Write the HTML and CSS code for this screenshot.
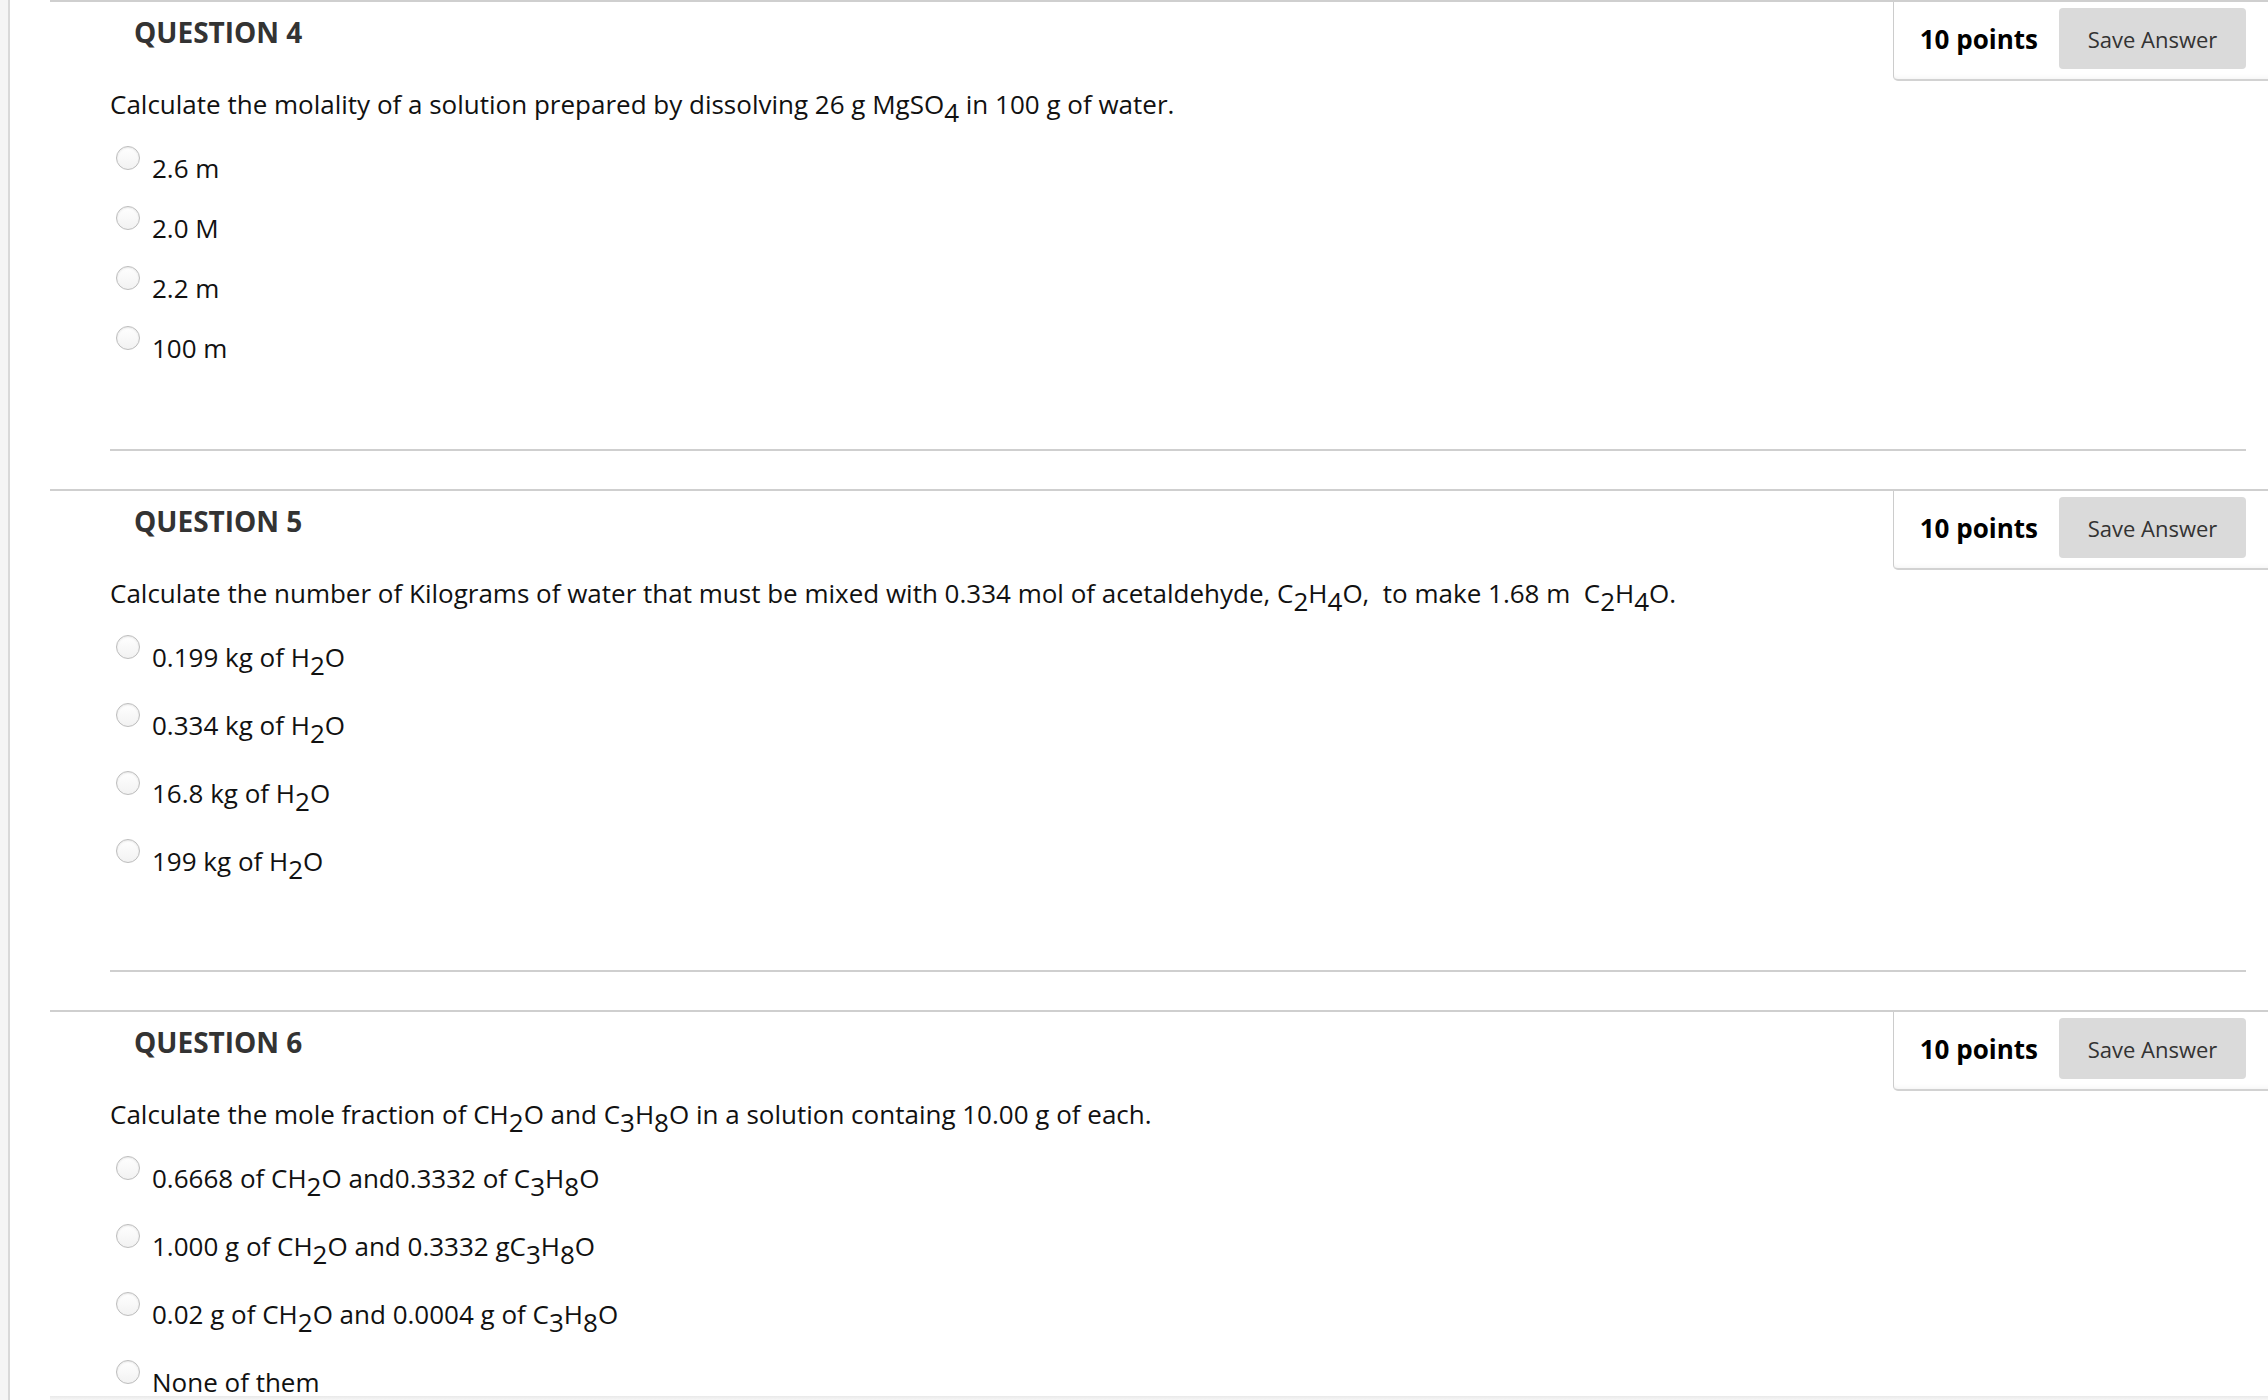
FILE: index.html
```html
<!DOCTYPE html>
<html lang="en">
<head>
<meta charset="utf-8">
<title>Test</title>
<link rel="stylesheet" href="styles.css">
</head>
<body>
<div class="page">
  <div class="rail"></div>
  <main class="main">
    <ul class="questions">
      <li class="question">
        <div class="q-head">
          <h3 class="q-title">QUESTION 4</h3>
          <div class="q-points">
            <span class="points">10 points</span>
            <button class="save" type="button">Save Answer</button>
          </div>
        </div>
        <div class="q-body">
          <p class="q-text">Calculate the molality of a solution prepared by dissolving 26 g MgSO<sub>4</sub> in 100 g of water.</p>
          <ul class="options">
            <li class="option"><span class="radio"></span><span class="opt-text">2.6 m</span></li>
            <li class="option"><span class="radio"></span><span class="opt-text">2.0 M</span></li>
            <li class="option"><span class="radio"></span><span class="opt-text">2.2 m</span></li>
            <li class="option"><span class="radio"></span><span class="opt-text">100 m</span></li>
          </ul>
        </div>
      </li>
      <li class="question">
        <div class="q-head">
          <h3 class="q-title">QUESTION 5</h3>
          <div class="q-points">
            <span class="points">10 points</span>
            <button class="save" type="button">Save Answer</button>
          </div>
        </div>
        <div class="q-body">
          <p class="q-text">Calculate the number of Kilograms of water that must be mixed with 0.334 mol of acetaldehyde, C<sub>2</sub>H<sub>4</sub>O,&nbsp; to make 1.68 m&nbsp; C<sub>2</sub>H<sub>4</sub>O.</p>
          <ul class="options">
            <li class="option"><span class="radio"></span><span class="opt-text">0.199 kg of H<sub>2</sub>O</span></li>
            <li class="option"><span class="radio"></span><span class="opt-text">0.334 kg of H<sub>2</sub>O</span></li>
            <li class="option"><span class="radio"></span><span class="opt-text">16.8 kg of H<sub>2</sub>O</span></li>
            <li class="option"><span class="radio"></span><span class="opt-text">199 kg of H<sub>2</sub>O</span></li>
          </ul>
        </div>
      </li>
      <li class="question">
        <div class="q-head">
          <h3 class="q-title">QUESTION 6</h3>
          <div class="q-points">
            <span class="points">10 points</span>
            <button class="save" type="button">Save Answer</button>
          </div>
        </div>
        <div class="q-body">
          <p class="q-text">Calculate the mole fraction of CH<sub>2</sub>O and C<sub>3</sub>H<sub>8</sub>O in a solution containg 10.00 g of each.</p>
          <ul class="options">
            <li class="option"><span class="radio"></span><span class="opt-text">0.6668 of CH<sub>2</sub>O and0.3332 of C<sub>3</sub>H<sub>8</sub>O</span></li>
            <li class="option"><span class="radio"></span><span class="opt-text">1.000 g of CH<sub>2</sub>O and 0.3332 gC<sub>3</sub>H<sub>8</sub>O</span></li>
            <li class="option"><span class="radio"></span><span class="opt-text">0.02 g of CH<sub>2</sub>O and 0.0004 g of C<sub>3</sub>H<sub>8</sub>O</span></li>
            <li class="option"><span class="radio"></span><span class="opt-text">None of them</span></li>
          </ul>
        </div>
      </li>
    </ul>
  </main>
</div>
<div class="footer-edge"></div>
</body>
</html>
```

FILE: styles.css
```css
* {
  box-sizing: border-box;
}

html, body {
  margin: 0;
  padding: 0;
  background: #ffffff;
}

body {
  font-family: "Open Sans", "Noto Sans", sans-serif;
  color: #111111;
}

.page {
  display: flex;
  min-height: 100vh;
}

.rail {
  flex: none;
  width: 10px;
  background: #f5f5f5;
  border-right: 2px solid #d9d9d9;
}

.main {
  flex: 1;
  padding-left: 40px;
}

.questions {
  list-style: none;
  margin: 0;
  padding: 0;
}

.question {
  border-top: 2px solid #cfcfcf;
  margin-bottom: 38px;
}

.q-head {
  display: flex;
  justify-content: space-between;
  align-items: flex-start;
}

.q-title {
  margin: 11px 0 0 84px;
  font-size: 28px;
  line-height: 38px;
  font-weight: 700;
  color: #333333;
}

.q-points {
  display: flex;
  align-items: center;
  gap: 21px;
  padding: 6px 22px 10px 26px;
  border-left: 1px solid #cccccc;
  border-bottom: 2px solid #d2d2d2;
  border-bottom-left-radius: 5px;
  box-shadow: inset 0 -5px 5px -4px rgba(0, 0, 0, 0.05);
}

.points {
  font-size: 26px;
  font-weight: 700;
  color: #000000;
  white-space: nowrap;
}

.save {
  width: 187px;
  height: 61px;
  padding: 0;
  border: none;
  border-radius: 4px;
  background: #dadada;
  color: #333333;
  font-family: "Open Sans", "Noto Sans", sans-serif;
  font-size: 22px;
}

.q-body {
  margin: 0 22px 0 60px;
  padding-bottom: 71px;
  border-bottom: 2px solid #cfcfcf;
}

.q-text {
  margin: 5px 0 0 0;
  font-size: 26px;
  line-height: normal;
  color: #111111;
}

sub {
  font-size: 26px;
  vertical-align: -8px;
  line-height: normal;
}

.options {
  list-style: none;
  margin: 8px 0 0 0;
  padding: 0;
}

.option {
  display: flex;
  align-items: flex-start;
  padding: 12px 0;
  font-size: 26px;
  line-height: normal;
}

.radio {
  flex: none;
  width: 24px;
  height: 24px;
  margin: -4px 12px 0 6px;
  border-radius: 50%;
  border: 1px solid #bdbdbd;
  background: linear-gradient(#ffffff, #f2f2f2);
  box-shadow: inset 0 1px 2px rgba(0, 0, 0, 0.1);
}

.opt-text {
  color: #111111;
}

.footer-edge {
  position: fixed;
  left: 50px;
  right: 0;
  bottom: 0;
  height: 4px;
  background: linear-gradient(#e9e9e9, #f6f6f6);
}
```
